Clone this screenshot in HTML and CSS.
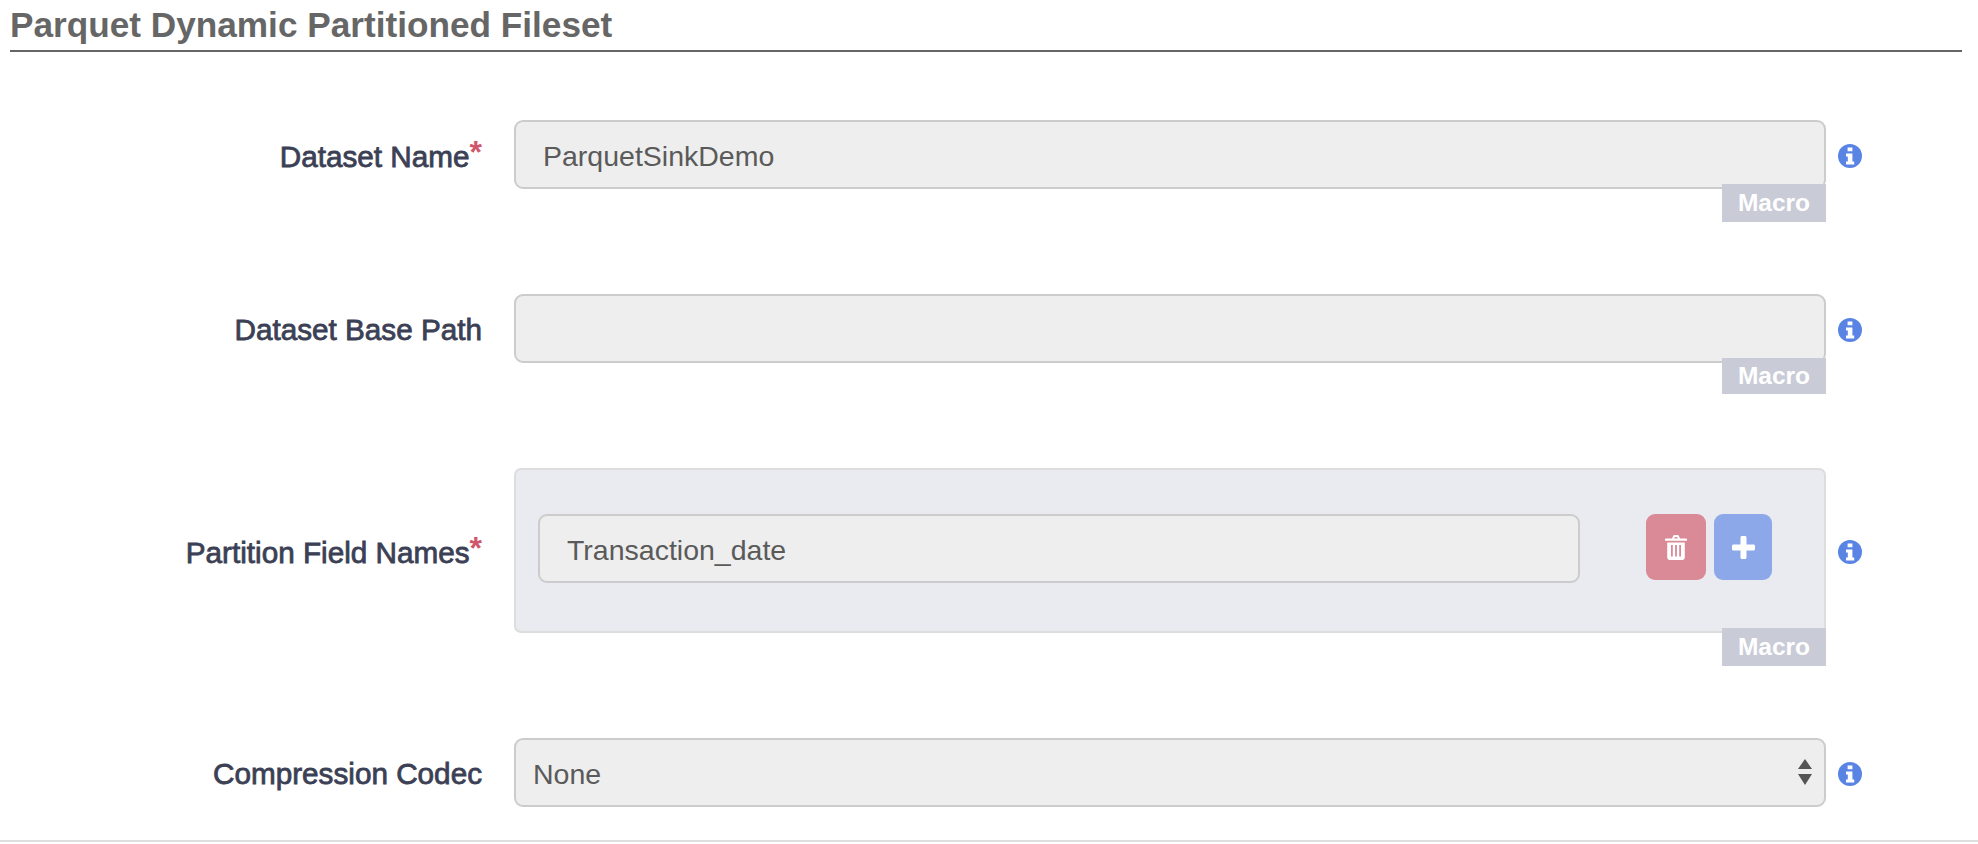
FILE: index.html
```html
<!DOCTYPE html>
<html lang="en">
<head>
  <meta charset="UTF-8" />
  <title>Parquet Dynamic Partitioned Fileset</title>
  <link rel="stylesheet" href="styles.css">
</head>
<body>
  <svg class="icon-defs" width="0" height="0">
    <symbol id="info" viewBox="0 0 24 24">
      <circle cx="12" cy="12" r="12" fill="#5a84e4"/>
      <path fill="#fff" d="M9.6 3.6h4.8v3.6H9.6zM8 9.4h6.4v8h1.8v3.2H8v-3.200h1.800v-4.800H8z"/>
    </symbol>
  </svg>

  <section class="group">
    <h2 class="group-title">Parquet Dynamic Partitioned Fileset</h2>

    <div class="form-row">
      <div class="form-label">Dataset Name<span class="required">*</span></div>
      <div class="control">
        <div class="field">ParquetSinkDemo</div>
        <span class="macro">Macro</span>
      </div>
      <svg class="info"><use href="#info"/></svg>
    </div>

    <div class="form-row">
      <div class="form-label">Dataset Base Path</div>
      <div class="control">
        <div class="field"></div>
        <span class="macro macro-short">Macro</span>
      </div>
      <svg class="info"><use href="#info"/></svg>
    </div>

    <div class="form-row">
      <div class="form-label">Partition Field Names<span class="required">*</span></div>
      <div class="control">
        <div class="csv-panel">
          <div class="field csv-field">Transaction_date</div>
          <button class="btn btn-remove" type="button">
            <svg width="22" height="25" viewBox="0 0 22 25"><path fill="#fff" fill-rule="evenodd" d="M7 3.600 8 1.200C8.300.5 8.900 0 9.700 0h2.600c.8 0 1.400.5 1.700 1.200L15 3.600h6c.6 0 1 .4 1 1v1.200H0V4.600c0-.6.4-1 1-1zM9.200 3.600h3.600l-.6-1.500H9.800zM2.200 7.400h17.600V22c0 1.700-1.100 3-2.500 3H4.700c-1.400 0-2.500-1.300-2.500-3zM6 10v11.500h1.800V10zM10.100 10v11.500h1.800V10zM14.200 10v11.500H16V10z"/></svg>
          </button>
          <button class="btn btn-add" type="button">
            <svg width="23" height="23" viewBox="0 0 23 23"><path fill="#fff" d="M8.500 1.500C8.500.7 9.200 0 10 0h3c.8 0 1.500.7 1.500 1.500v7h7c.8 0 1.500.7 1.500 1.500v3c0 .8-.7 1.500-1.500 1.500h-7v7c0 .8-.7 1.500-1.500 1.500h-3c-.8 0-1.500-.7-1.500-1.500v-7h-7C.7 14.500 0 13.800 0 13v-3c0-.8.7-1.500 1.500-1.500h7z"/></svg>
          </button>
        </div>
        <span class="macro">Macro</span>
      </div>
      <svg class="info"><use href="#info"/></svg>
    </div>

    <div class="form-row">
      <div class="form-label">Compression Codec</div>
      <div class="control">
        <div class="field select-field">
          None
          <svg class="select-arrows" width="14" height="26" viewBox="0 0 14 26"><path fill="#555" d="M7 0l7 10H0zM0 15h14L7 26z"/></svg>
        </div>
      </div>
      <svg class="info"><use href="#info"/></svg>
    </div>
  </section>
</body>
</html>
```

FILE: styles.css
```css
/* Base Styles */
body {
  font-family: 'Liberation Sans', Arial, sans-serif;
  background-color: #fff;
  margin: 0;
  padding: 0;
}

.icon-defs {
  display: block;
  height: 0;
}

.group {
  padding-bottom: 33px;
  border-bottom: 2px solid #dedede;
}

.group-title {
  margin: 0 16px 68px 10px;
  height: 50px;
  line-height: 50px;
  font-size: 35.200px;
  font-weight: bold;
  color: #666;
  border-bottom: 2px solid #666;
}

.form-row {
  display: grid;
  grid-template-columns: 514px 1312px 24px;
  align-items: center;
  margin-bottom: 105px;
}

.form-row:last-child {
  margin-bottom: 0;
}

.form-label {
  padding: 3px 32px 0 0;
  text-align: right;
  font-size: 29.700px;
  line-height: 36px;
  color: #3b4055;
  -webkit-text-stroke: 0.8px #3b4055;
}

.required {
  color: #d0566b;
  font-size: 32px;
  font-weight: bold;
  -webkit-text-stroke: 0;
  position: relative;
  top: -4px;
}

.control {
  position: relative;
}

.field {
  box-sizing: border-box;
  height: 69px;
  line-height: 69px;
  padding: 0 27px;
  font-size: 28.500px;
  color: #5a5a5a;
  background-color: #eee;
  border: 2px solid #ccc;
  border-radius: 9px;
}

.macro {
  position: absolute;
  right: 0;
  bottom: -33px;
  width: 104px;
  height: 38px;
  line-height: 38px;
  text-align: center;
  font-size: 24.500px;
  font-weight: bold;
  color: #fff;
  background-color: #c9cbd7;
}

.macro-short {
  bottom: -31px;
  height: 36px;
  line-height: 36px;
}

.csv-panel {
  box-sizing: border-box;
  height: 165px;
  display: flex;
  align-items: flex-start;
  padding: 44px 22px;
  background-color: #eaebf0;
  border: 2px solid #ddd;
  border-radius: 7px;
}

.csv-field {
  width: 1042px;
  margin-right: 66px;
}

.btn {
  display: flex;
  align-items: center;
  justify-content: center;
  height: 66px;
  padding: 0;
  border: 0;
  border-radius: 9px;
}

.btn-remove {
  width: 60px;
  margin-right: 8px;
  background-color: #d98a96;
}

.btn-add {
  width: 58px;
  background-color: #8ca8e8;
}

.select-field {
  position: relative;
  padding-left: 17px;
}

.select-arrows {
  position: absolute;
  right: 12px;
  top: 19px;
}

.info {
  width: 24px;
  height: 24px;
  margin-left: 12px;
  margin-top: 2px;
}
```
